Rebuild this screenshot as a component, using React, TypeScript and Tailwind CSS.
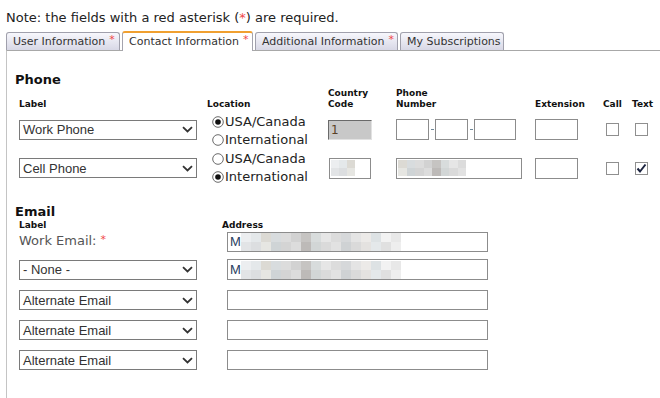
import React from "react";

const SANS = "font-['DejaVu_Sans',Verdana,sans-serif]";
const ARIAL = "font-['Liberation_Sans',Arial,sans-serif]";

const TABS = [
  { label: "User Information", req: true, w: "w-[114px]" },
  { label: "Contact Information", req: true, w: "w-[131px]", active: true },
  { label: "Additional Information", req: true, w: "w-[143px]" },
  { label: "My Subscriptions", req: false, w: "w-[104px]" },
];

// blurred-out values (pixelated squares)
const PIX_A = ["#eceef0", "#e4e8ea", "#dcdad4", "#d8dcde", "#dcdcdc", "#d2d2d2", "#c6c4c2", "#d8dcdc", "#e6e6e6", "#dcdcdc", "#d6d8da", "#e4e4e4", "#eceae8", "#dde2e4", "#f2f2f2", "#e8e8e8"];
const PIX_B = ["#e2e4e6", "#dcdee0", "#e6e6e2", "#cfd4d6", "#d4d4d4", "#dcdcdc", "#bdbab8", "#d2d6d6", "#dadada", "#e2e2e2", "#cfd2d4", "#dadada", "#e4e2e0", "#e4e8ea", "#e0e0e0", "#eeeeee"];

function Pixels({ cols, size, rows }: { cols: number; size: string; rows: string[][] }) {
  return (
    <div className="flex flex-col">
      {rows.map((row, r) => (
        <div key={r} className="flex">
          {row.slice(0, cols).map((c, i) => (
            <div key={i} className={size} style={{ backgroundColor: c }} />
          ))}
        </div>
      ))}
    </div>
  );
}

function Req() {
  return <span className="text-[#f04848] text-[11px] ml-[4px] relative top-[-2px]">*</span>;
}

function Select({ value }: { value: string }) {
  return (
    <div className={`${ARIAL} w-[178px] h-[20px] border border-[#7a7a7a] bg-white flex items-center pl-[3px] pr-[3px] text-[13px] text-[#333]`}>
      <span className="flex-1 leading-none">{value}</span>
      <svg width="11" height="7" viewBox="0 0 11 7">
        <path d="M1 1.2 L5.5 5.5 L10 1.2" fill="none" stroke="#333" strokeWidth="1.8" />
      </svg>
    </div>
  );
}

function Input({ className = "", children }: { className?: string; children?: React.ReactNode }) {
  return (
    <div className={`border border-[#8c8c8c] bg-white flex items-center overflow-hidden ${className}`}>
      {children}
    </div>
  );
}

function Radio({ checked, label }: { checked?: boolean; label: string }) {
  return (
    <div className="flex items-center h-[18px]">
      <svg width="12" height="12" viewBox="0 0 12 12" className="mr-[1px]">
        <circle cx="6" cy="6" r="5.3" fill="#fff" stroke="#6a6a6a" strokeWidth="1" />
        {checked && <circle cx="6" cy="6" r="2.8" fill="#111" />}
      </svg>
      <span className="text-[13px] text-[#222]">{label}</span>
    </div>
  );
}

function Check({ checked }: { checked?: boolean }) {
  return (
    <div className="w-[13px] h-[13px] border border-[#8f8f8f] bg-white relative">
      {checked && (
        <svg width="13" height="13" viewBox="0 0 13 13" className="absolute left-[-1px] top-[-1px]">
          <path d="M2.5 6.5 L5 9.5 L10.5 2.5" fill="none" stroke="#1c2440" strokeWidth="2" />
        </svg>
      )}
    </div>
  );
}

function Dash() {
  return (
    <div className="w-[6px] flex justify-center">
      <div className="w-[3px] h-[1px] bg-[#6e8898]" />
    </div>
  );
}

export default function App() {
  return (
    <div className={`${SANS} bg-white w-[660px] h-[398px] overflow-hidden text-[#222]`}>
      <p className="pt-[10px] pl-[6px] text-[13px] leading-[15px] text-[#222]">
        Note: the fields with a red asterisk (<span className="text-[#f04848]">*</span>) are required.
      </p>

      {/* tabs */}
      <div className="mt-[6px] h-[19px] pl-[6px] flex items-end gap-[2px] relative z-10">
        {TABS.map((t) =>
          t.active ? (
            <div
              key={t.label}
              className={`${t.w} h-[20px] mb-[-1px] bg-white border border-b-0 border-[#a4a4ae] border-t-2 border-t-[#f0a030] rounded-t-[3px] pl-[6px] text-[11px] leading-[17px] text-[#333] whitespace-nowrap`}
            >
              {t.label}
              {t.req && <Req />}
            </div>
          ) : (
            <div
              key={t.label}
              className={`${t.w} h-[18px] bg-gradient-to-b from-[#f7f7fc] to-[#d8d8e6] border border-b-0 border-[#a0a0ac] rounded-t-[3px] pl-[6px] text-[11px] leading-[17px] text-[#333] whitespace-nowrap`}
            >
              {t.label}
              {t.req && <Req />}
            </div>
          )
        )}
      </div>

      <div className="ml-[6px] h-[348px] border-t border-t-[#a8a8a8] border-l border-l-[#c4c4c4] pl-[8px]">
        {/* Phone */}
        <h2 className="mt-[21px] text-[13px] font-bold leading-[16px] text-[#111]">Phone</h2>
        <div className="pl-[4px]">
          <div className="grid grid-cols-[188px_121px_68px_139px_68px_29px_1fr] items-end text-[9px] font-bold leading-[11px] text-[#111]">
            <div>Label</div>
            <div>Location</div>
            <div>
              Country
              <br />
              Code
            </div>
            <div>
              Phone
              <br />
              Number
            </div>
            <div>Extension</div>
            <div>Call</div>
            <div>Text</div>
          </div>

          {/* row 1 */}
          <div className="grid grid-cols-[188px_121px_68px_139px_68px_29px_1fr] items-center h-[38px]">
            <Select value="Work Phone" />
            <div className="self-start mt-[3px] ml-[5px]">
              <Radio checked label="USA/Canada" />
              <Radio label="International" />
            </div>
            <div className="w-[44px] h-[20px] bg-[#c8c8c8] border border-t-[#6a6a6a] border-l-[#6a6a6a] border-r-[#e2e2e2] border-b-[#e2e2e2] pl-[2px] text-[12px] leading-[18px] text-[#5a4025]">
              1
            </div>
            <div className="flex items-center">
              <Input className="w-[33px] h-[21px]" />
              <Dash />
              <Input className="w-[33px] h-[21px]" />
              <Dash />
              <Input className="w-[42px] h-[21px]" />
            </div>
            <Input className="w-[43px] h-[21px]" />
            <div className="pl-[3px]">
              <Check />
            </div>
            <div className="pl-[3px]">
              <Check />
            </div>
          </div>

          {/* row 2 */}
          <div className="grid grid-cols-[188px_121px_68px_139px_68px_29px_1fr] items-center h-[38px] mt-[1px]">
            <Select value="Cell Phone" />
            <div className="self-start mt-[1px] ml-[5px]">
              <Radio label="USA/Canada" />
              <Radio checked label="International" />
            </div>
            <Input className="w-[42px] h-[21px] ml-[1px] pl-[1px]">
              <Pixels cols={3} size="w-[8px] h-[8px]" rows={[PIX_A.slice(0, 3), PIX_B.slice(0, 3)]} />
            </Input>
            <Input className="w-[126px] h-[21px] pl-[1px]">
              <Pixels cols={8} size="w-[8.5px] h-[8px]" rows={[PIX_A.slice(2, 10), PIX_B.slice(2, 10)]} />
            </Input>
            <Input className="w-[43px] h-[21px]" />
            <div className="pl-[3px]">
              <Check />
            </div>
            <div className="pl-[3px]">
              <Check checked />
            </div>
          </div>
        </div>

        {/* Email */}
        <h2 className="mt-[17px] text-[13px] font-bold leading-[16px] text-[#111]">Email</h2>
        <div className="pl-[4px]">
          <div className="grid grid-cols-[203px_1fr] text-[9px] font-bold leading-[11px] text-[#111]">
            <div>Label</div>
            <div>Address</div>
          </div>

          <div className="grid grid-cols-[208px_1fr] items-center h-[20px] mt-[1px]">
            <div className="text-[13px] text-[#555] leading-[15px] mt-[-2px]">
              Work Email:
              <Req />
            </div>
            <Input className={`${ARIAL} w-[261px] h-[20px] pl-[2px] text-[13px] text-[#2a4060]`}>
              <span className="w-[11px]">M</span>
              <Pixels cols={16} size="w-[10px] h-[9px]" rows={[PIX_A, PIX_B]} />
            </Input>
          </div>

          <div className="grid grid-cols-[208px_1fr] items-center h-[21px] mt-[7px]">
            <Select value="- None -" />
            <Input className={`${ARIAL} w-[261px] h-[21px] pl-[2px] text-[13px] text-[#2a4060]`}>
              <span className="w-[11px]">M</span>
              <Pixels cols={16} size="w-[10px] h-[9px]" rows={[PIX_A, PIX_B]} />
            </Input>
          </div>

          {[0, 1, 2].map((i) => (
            <div key={i} className="grid grid-cols-[208px_1fr] items-center h-[20px] mt-[10px]">
              <Select value="Alternate Email" />
              <Input className="w-[261px] h-[20px]" />
            </div>
          ))}
        </div>
      </div>
    </div>
  );
}
